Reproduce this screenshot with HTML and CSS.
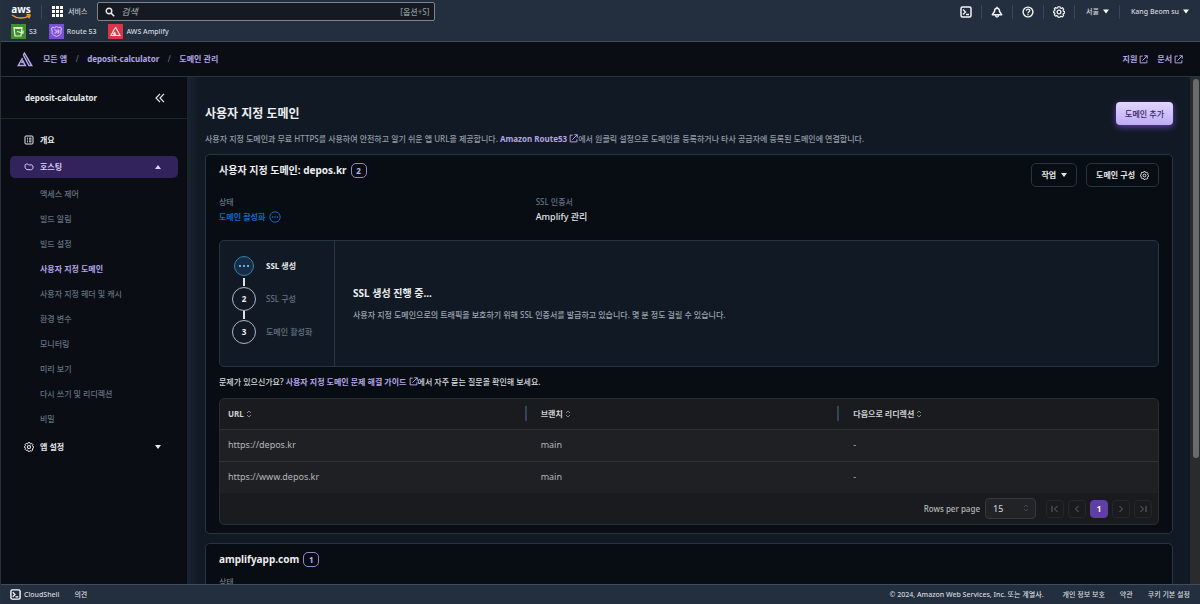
FILE: index.html
```html
<!DOCTYPE html>
<html lang="ko">
<head>
<meta charset="utf-8">
<title>도메인 관리</title>
<link rel="stylesheet" href="styles.css">
</head>
<body>
<svg class="defs" aria-hidden="true">
  <symbol id="external" viewBox="0 0 12 12"><path d="M5 1.5H1.5v9h9V7M7 1h4v4M11 1L4.5 7.500" fill="none" stroke="currentColor" stroke-width="1.300"/></symbol>
  <symbol id="gear" viewBox="0 0 16 16"><path d="M6.700 1h2.600l.5 1.700 1.200.5 1.600-.9 1.600 1.900-.8 1.500.4 1.200 1.700.6v2l-1.700.5-.5 1.200.8 1.600-1.800 1.700-1.500-.8-1.200.5L9.200 15H6.800l-.5-1.700-1.300-.5-1.500.8-1.700-1.700.8-1.600-.5-1.200L.5 9V7l1.700-.6.4-1.200-.8-1.500L3.500 2l1.500 1 1.200-.4z" fill="none" stroke="currentColor" stroke-width="1.600" stroke-linejoin="round"/><circle cx="8" cy="8" r="2.500" fill="none" stroke="currentColor" stroke-width="1.700"/></symbol>
  <symbol id="caret" viewBox="0 0 6 4"><path d="M0 0h6L3 4z" fill="currentColor"/></symbol>
  <symbol id="shell" viewBox="0 0 12 12"><rect x="1" y="1" width="10" height="10" rx="1.500" fill="none" stroke="currentColor" stroke-width="1.500"/><path d="M3 3.500L5.500 6 3 8.500M6 8.500h3" fill="none" stroke="currentColor" stroke-width="1.300"/></symbol>
  <symbol id="sort" viewBox="0 0 6 8"><path d="M1 3l2-2 2 2M1 5l2 2 2-2" fill="none" stroke="currentColor"/></symbol>
  <symbol id="amplify" viewBox="0 0 16 15"><path d="M5.500 6L1.300 13.500h7L5.800 8.800 4.700 11.200M6.300 3L7.500 1.200 14.700 13.500H12L6.300 3" fill="none" stroke="currentColor" stroke-width="1.500"/></symbol>
</svg>
<div class="app">
  <header class="top">
    <div class="top-row">
      <a class="aws" href="#" aria-label="aws"><span>aws</span><svg viewBox="0 0 20 6"><path d="M1 1c5 4 12 4 17 .8M15.500 1c2-.6 3.600-.6 3.500.2S18.500 3.500 17.600 4.300" fill="none" stroke="#f79a1e" stroke-width="1.500"/></svg></a>
      <button class="services"><svg viewBox="0 0 11 11"><path d="M0 0h3v3H0zM4 0h3v3H4zM8 0h3v3H8zM0 4h3v3H0zM4 4h3v3H4zM8 4h3v3H8zM0 8h3v3H0zM4 8h3v3H4zM8 8h3v3H8z" fill="#fff"/></svg>서비스</button>
      <label class="search"><svg viewBox="0 0 10 10"><circle cx="4" cy="4" r="2.800" fill="none" stroke="#e8eaec" stroke-width="1.400"/><path d="M6 6l3.200 3.200" stroke="#e8eaec" stroke-width="1.600"/></svg><input type="search" placeholder="검색" aria-label="검색"><span>[옵션+S]</span></label>
      <div class="tools">
        <button aria-label="CloudShell"><svg><use href="#shell"/></svg></button>
        <button aria-label="알림"><svg viewBox="0 0 12 12"><path d="M6 .8v1.500M6 2.300C3.800 2.300 3.500 4 3.500 5.500L1.300 8.700h9.400L8.500 5.500C8.500 4 8.200 2.300 6 2.300zM4.500 9.500c.3 2 2.700 2 3 0" fill="none" stroke="currentColor" stroke-width="1.500" stroke-linejoin="round"/></svg></button>
        <button aria-label="도움말"><svg viewBox="0 0 12 12"><circle cx="6" cy="6" r="4.900" fill="none" stroke="currentColor" stroke-width="1.400"/><path d="M4.300 4.800c0-2.300 3.500-2.300 3.500-.2C7.800 5.800 6 5.700 6 7.200M6 8v1.200" fill="none" stroke="currentColor" stroke-width="1.300"/></svg></button>
        <button aria-label="설정"><svg><use href="#gear"/></svg></button>
        <button class="wide">서울<svg class="caret"><use href="#caret"/></svg></button>
        <button class="wide">Kang Beom su<svg class="caret"><use href="#caret"/></svg></button>
      </div>
    </div>
    <nav class="favorites">
      <a href="#"><svg class="s3" viewBox="0 0 15 15"><path d="M3 3.500h8l-1 8.500H4zM3 3.500c1.500 1.300 6.500 1.300 8 0M6 7.500l6 1.500V6.500" fill="none" stroke="#e6f5df" stroke-width="1.200"/></svg>S3</a>
      <a href="#"><svg class="r53" viewBox="0 0 15 15"><path d="M3.500 3l2 .7 2-1.200 2 1.200 2-.7 1 2-.7 2c1 4-2 4-4.300 5.500C5.200 11 2.200 11 3.200 7l-.7-2zM5.500 6h1.700v3H5.500M8.300 6h1.500v3H8.300M8.300 7.500h1.500" fill="none" stroke="#ded0ff"/></svg>Route 53</a>
      <a href="#"><svg class="amp" viewBox="0 0 15 15"><path d="M7 4L3 11.500h3.500L5.400 9M7.500 3l4.500 8.500H7.800L6.500 8" fill="none" stroke="#ffe4e4" stroke-width="1.200"/></svg>AWS Amplify</a>
    </nav>
  </header>
  <div class="crumbbar">
    <nav class="crumbs"><svg><use href="#amplify"/></svg><a href="#">모든 앱</a><i>/</i><a href="#">deposit-calculator</a><i>/</i><a href="#">도메인 관리</a></nav>
    <div class="help"><a href="#">지원<svg class="ext"><use href="#external"/></svg></a><a href="#">문서<svg class="ext"><use href="#external"/></svg></a></div>
  </div>
  <div class="body">
    <aside class="side">
      <div class="side-head"><strong>deposit-calculator</strong><button aria-label="접기"><svg viewBox="0 0 10 10"><path d="M5 .8L1 5l4 4.200M9 .8L5 5l4 4.200" fill="none" stroke="currentColor" stroke-width="1.200"/></svg></button></div>
      <nav class="menu">
        <a class="group" href="#"><svg viewBox="0 0 10 10"><rect x="1" y="1" width="8" height="8" rx="1" fill="none" stroke="currentColor"/><path d="M3 3.200h1M5 3.200h2.500M3 5h1M5 5h2.500M3 6.800h1M5 6.800h2.500" stroke="currentColor"/></svg>개요</a>
        <button class="group open"><svg viewBox="0 0 10 10"><path d="M1 3.800C1 2.200 2 2 3 2c1.300 0 1.300.9 2.300.9H7c1.400 0 2 .8 2 2.200C9 7.300 8 7.700 6.500 7.700H4C2 7.700 1 6.500 1 3.800z" fill="none" stroke="currentColor"/></svg>호스팅<svg class="caret up"><use href="#caret"/></svg></button>
        <div class="sub">
          <a href="#">액세스 제어</a><a href="#">빌드 알림</a><a href="#">빌드 설정</a><a class="current" href="#">사용자 지정 도메인</a><a href="#">사용자 지정 헤더 및 캐시</a><a href="#">환경 변수</a><a href="#">모니터링</a><a href="#">미리 보기</a><a href="#">다시 쓰기 및 리디렉션</a><a href="#">비밀</a>
        </div>
        <button class="group"><svg><use href="#gear"/></svg>앱 설정<svg class="caret"><use href="#caret"/></svg></button>
      </nav>
    </aside>
    <main class="main">
      <div class="page-head"><h1>사용자 지정 도메인</h1><button class="primary">도메인 추가</button></div>
      <p class="desc">사용자 지정 도메인과 무료 HTTPS를 사용하여 안전하고 알기 쉬운 앱 URL을 제공합니다. <a href="#">Amazon Route53 <svg class="ext"><use href="#external"/></svg></a>에서 원클릭 설정으로 도메인을 등록하거나 타사 공급자에 등록된 도메인에 연결합니다.</p>
      <section class="card">
        <div class="card-head">
          <h2>사용자 지정 도메인: depos.kr<span class="badge">2</span></h2>
          <div class="actions"><button>작업<svg class="caret"><use href="#caret"/></svg></button><button>도메인 구성<svg class="gear"><use href="#gear"/></svg></button></div>
        </div>
        <dl class="facts">
          <div><dt>상태</dt><dd class="active">도메인 활성화<svg viewBox="0 0 12 12"><circle cx="6" cy="6" r="5.200" fill="none" stroke="currentColor"/><path d="M3 6h1.300M5.400 6h1.300M7.800 6h1.300" stroke="currentColor" stroke-width="1.300"/></svg></dd></div>
          <div><dt>SSL 인증서</dt><dd>Amplify 관리</dd></div>
        </dl>
        <div class="progress">
          <ol class="steps">
            <li class="now"><b><svg viewBox="0 0 12 4"><path d="M1 1h2v2H1zM5 1h2v2H5zM9 1h2v2H9z" fill="currentColor"/></svg></b><span>SSL 생성</span></li>
            <li><b>2</b><span>SSL 구성</span></li>
            <li><b>3</b><span>도메인 활성화</span></li>
          </ol>
          <div class="message"><h3>SSL 생성 진행 중...</h3><p>사용자 지정 도메인으로의 트래픽을 보호하기 위해 SSL 인증서를 발급하고 있습니다. 몇 분 정도 걸릴 수 있습니다.</p></div>
        </div>
        <p class="faq">문제가 있으신가요? <a href="#">사용자 지정 도메인 문제 해결 가이드 <svg class="ext"><use href="#external"/></svg></a>에서 자주 묻는 질문을 확인해 보세요.</p>
        <div class="table-box">
          <table>
            <thead><tr><th><div>URL<svg><use href="#sort"/></svg></div></th><th><div>브랜치<svg><use href="#sort"/></svg></div></th><th><div>다음으로 리디렉션<svg><use href="#sort"/></svg></div></th></tr></thead>
            <tbody><tr><td>https://depos.kr</td><td>main</td><td>-</td></tr><tr><td>https://www.depos.kr</td><td>main</td><td>-</td></tr></tbody>
          </table>
          <div class="pager">
            <label for="rows">Rows per page</label>
            <span class="select"><select id="rows"><option>15</option></select><svg><use href="#sort"/></svg></span>
            <div class="pages">
              <button aria-label="처음"><svg viewBox="0 0 8 8"><path d="M1 1v6M6.500 1l-3 3 3 3" fill="none" stroke="currentColor"/></svg></button>
              <button aria-label="이전"><svg viewBox="0 0 8 8"><path d="M5.500 1l-3 3 3 3" fill="none" stroke="currentColor"/></svg></button>
              <button class="on">1</button>
              <button aria-label="다음"><svg viewBox="0 0 8 8"><path d="M2.500 1l3 3-3 3" fill="none" stroke="currentColor"/></svg></button>
              <button aria-label="마지막"><svg viewBox="0 0 8 8"><path d="M7 1v6M1.500 1l3 3-3 3" fill="none" stroke="currentColor"/></svg></button>
            </div>
          </div>
        </div>
      </section>
      <section class="card">
        <div class="card-head"><h2>amplifyapp.com<span class="badge">1</span></h2></div>
        <dl class="facts"><div><dt>상태</dt></div></dl>
      </section>
    </main>
    <div class="scroll"><div class="thumb"></div></div>
  </div>
  <footer class="foot">
    <a href="#"><svg><use href="#shell"/></svg>CloudShell</a><a href="#">의견</a>
    <span class="copy">© 2024, Amazon Web Services, Inc. 또는 계열사.</span><a href="#">개인 정보 보호</a><a href="#">약관</a><a href="#">쿠키 기본 설정</a>
  </footer>
</div>
</body>
</html>
```
FILE: styles.css
```css
* { box-sizing: border-box; }
body { margin: 0; background: #0a0e14; color: #d5d9de; font: 8px/14px "Noto Sans", "Noto Sans CJK KR", sans-serif; }
h1, h2, h3, p, dl, dd, ol { margin: 0; padding: 0; }
a { color: inherit; text-decoration: none; }
button { margin: 0; padding: 0; border: 0; background: none; color: inherit; font: inherit; white-space: nowrap; }
i { font-style: normal; }
svg { flex: none; }
.defs { position: absolute; width: 0; height: 0; }
.caret { width: 6px; height: 4px; }
.ext { width: 9px; height: 9px; vertical-align: -1px; }

.app { height: 100vh; display: flex; flex-direction: column; border-left: 1px solid #27313a; }

.top { background: #232f3e; border-bottom: 1px solid #414d5a; height: 42px; flex: none; font-size: 7px; font-weight: 500; }
.top-row { display: flex; align-items: center; height: 23px; padding: 0 11px 0 10px; }
.aws { display: flex; flex-direction: column; align-items: center; width: 20px; font-size: 10px; line-height: 10px; font-weight: 700; color: #fff; }
.aws svg { width: 20px; height: 6px; }
.services { display: flex; align-items: center; gap: 5px; margin-left: 10px; padding-left: 10px; border-left: 1px solid #3a4655; color: #d0d4d9; }
.services svg { width: 11px; height: 11px; }
.search { display: flex; align-items: center; gap: 6px; width: 338px; height: 19px; margin-left: 10px; padding: 0 5px 0 7px; background: #161922; border: 1px solid #7b8488; border-radius: 2px; color: #8d9797; font-size: 8px; }
.search svg { width: 10px; height: 10px; }
.search input { flex: 1; min-width: 0; height: 14px; border: 0; padding: 0; background: none; font: inherit; font-size: 9px; color: #fff; outline: 0; }
.search input::placeholder { color: #8d9797; font-style: italic; }
.tools { display: flex; margin-left: auto; color: #f4f5f6; }
.tools button { width: 31px; height: 14px; display: flex; align-items: center; justify-content: center; border-right: 1px solid #3a4655; }
.tools button svg { width: 12px; height: 12px; }
.tools .wide { width: auto; gap: 4px; padding: 0 10px 0 11px; color: #d5d9de; }
.tools .wide:last-child { padding-right: 0; border: 0; }
.tools .wide .caret { width: 6px; height: 5px; color: #fff; }
.favorites { display: flex; gap: 12px; padding: 1px 10px; }
.favorites a { display: flex; align-items: center; gap: 3px; }
.favorites svg { width: 15px; height: 15px; }
.s3 { background: #3f8f2b; }
.r53 { background: #7d4fd6; }
.amp { background: #dc3545; }

.crumbbar { display: flex; justify-content: space-between; align-items: center; height: 35px; flex: none; padding: 0 17px 0 16px; border-bottom: 1px solid #263445; color: #b3a3e8; font-weight: 700; }
.crumbs { display: flex; align-items: center; }
.crumbs svg { width: 16px; height: 15px; margin-right: 10px; }
.crumbs i { width: 20px; text-align: center; color: #6b7885; font-weight: 400; }
.help { display: flex; gap: 9px; }
.help a { display: flex; align-items: center; gap: 2px; }

.body { display: flex; flex: 1; min-height: 0; }
.side { width: 186px; flex: none; }
.side-head { display: flex; align-items: center; justify-content: space-between; height: 42px; padding: 0 22px 0 24px; border-bottom: 1px solid #1c2734; color: #e8eaec; }
.side-head svg { width: 10px; height: 10px; display: block; }
.menu { padding: 10px 9px; }
.group { display: flex; align-items: center; gap: 6px; width: 100%; height: 22px; padding: 0 17px 0 14px; border-radius: 5px; font-weight: 700; color: #e8eaec; }
.group svg:first-child { width: 10px; height: 10px; }
.group .caret { margin-left: auto; }
.up { transform: rotate(180deg); }
.open { margin-top: 5px; background: #33235c; color: #dcd2ff; }
.sub { display: flex; flex-direction: column; padding: 3px 0 5px 30px; color: #647282; font-weight: 500; }
.sub a { line-height: 25px; }
.sub .current { color: #b3a3e8; font-weight: 700; }

.main { flex: 1; min-width: 0; overflow: hidden; padding: 25px 17px 0 18px; background: linear-gradient(90deg, #19242f, #111a24 12px); }
.page-head { display: flex; align-items: center; justify-content: space-between; }
h1 { font-size: 12px; line-height: 20px; color: #eceef0; }
.primary { height: 23px; padding: 0 9px; border-radius: 4px; background: linear-gradient(#e0d6ff, #bfabf5); color: #32245c; font-weight: 500; box-shadow: 0 2px 6px #5f3fa8; }
.desc { margin-top: 7px; color: #919ca8; font-weight: 500; }
.desc a, .faq a { color: #b3a3e8; font-weight: 700; }
.card { margin-top: 8px; padding: 8px 13px; background: #080d13; border: 1px solid #263545; border-radius: 5px; }
.card + .card { margin-top: 9px; }
.card-head { display: flex; align-items: flex-start; justify-content: space-between; }
h2 { display: flex; align-items: center; gap: 4px; font-size: 10px; line-height: 15px; color: #eceef0; }
.badge { width: 16px; height: 15px; border: 1px solid #9583d0; border-radius: 5px; text-align: center; color: #c0b0f0; font-size: 8px; line-height: 13px; }
.actions { display: flex; gap: 9px; }
.actions button { height: 24px; display: flex; align-items: center; gap: 5px; padding: 0 9px; border: 1px solid #263545; border-radius: 5px; font-weight: 700; color: #e3e6e9; }
.actions .gear { width: 9px; height: 9px; }
.facts { display: grid; grid-template-columns: repeat(3, 1fr); gap: 10px; margin-top: 8px; }
.facts dt { color: #647282; font-weight: 500; }
.facts dd { display: flex; align-items: center; gap: 4px; margin-top: 1px; color: #e0e3e6; font-size: 9px; font-weight: 500; }
.facts .active { color: #1268c4; font-size: 8px; font-weight: 700; }
.facts svg { width: 12px; height: 12px; }
.progress { display: flex; min-height: 127px; margin-top: 16px; background: #111a24; border: 1px solid #263545; border-radius: 5px; }
.steps { width: 115px; flex: none; padding: 12px 0 0 12px; border-right: 1px solid #263545; list-style: none; }
.steps li { position: relative; display: flex; align-items: center; gap: 10px; height: 25px; margin-bottom: 8px; color: #647282; font-weight: 500; }
.steps li + li::before { content: ""; position: absolute; left: 11px; top: -8px; width: 2px; height: 8px; background: #e0e3e6; }
.steps b { width: 24px; height: 24px; display: flex; align-items: center; justify-content: center; border: 1px solid #b0b6bc; border-radius: 50%; color: #eceef0; }
.steps .now { color: #e8eaec; font-weight: 700; }
.steps .now b { width: 20px; height: 20px; margin: 0 2px; border-color: #377dad; background: #172d43; color: #5bb0ee; }
.steps svg { width: 12px; height: 4px; }
.message { display: flex; flex-direction: column; justify-content: center; gap: 8px; padding: 0 18px; color: #9ca5af; font-weight: 500; }
h3 { font-size: 10px; line-height: 14px; color: #eceef0; }
.faq { margin: 8px 0 9px; font-weight: 500; }
.table-box { background: #1a1b1e; border: 1px solid #292c31; border-radius: 5px; overflow: hidden; }
table { width: 100%; border-collapse: collapse; table-layout: fixed; }
th, td { padding: 0 8px; text-align: left; color: #b4b6ba; }
th { height: 30px; padding-right: 6px; color: #cfd1d4; }
th div { display: flex; align-items: center; gap: 2px; height: 15px; }
th:not(:last-child) div { border-right: 2px solid #324459; }
th svg { width: 6px; height: 8px; color: #7c828a; }
td { height: 32px; background: #1f2023; border-top: 1px solid #2f3238; font-size: 9px; }
.pager { display: flex; align-items: center; justify-content: flex-end; gap: 5px; height: 31px; padding-right: 6px; color: #b4b6ba; font-weight: 500; }
.select { position: relative; width: 51px; height: 21px; }
.select select { appearance: none; width: 100%; height: 100%; padding: 0 7px; border: 1px solid #35383d; border-radius: 4px; background: #212327; color: #c2c4c8; font: inherit; font-size: 9px; }
.select svg { position: absolute; right: 7px; top: 6px; width: 6px; height: 8px; color: #36475a; }
.pages { display: flex; gap: 4px; margin-left: 5px; }
.pages button { width: 18px; height: 18px; display: flex; align-items: center; justify-content: center; border: 1px solid #25272b; border-radius: 4px; color: #62666d; }
.pages svg { width: 8px; height: 8px; }
.pages .on { background: #5f3fa3; border-color: #5f3fa3; color: #fff; font-weight: 700; }
.scroll { width: 10px; flex: none; padding: 2px 1px 0 3px; background: #2b2b2b; }
.thumb { height: 75%; border-radius: 3px; background: #6b6b6b; }

.foot { display: flex; align-items: center; gap: 15px; height: 20px; flex: none; padding: 0 10px 0 9px; background: #232f3e; border-top: 1px solid #414d5a; font-size: 7px; font-weight: 500; }
.foot a { display: flex; align-items: center; gap: 3px; }
.foot svg { width: 11px; height: 11px; color: #fff; }
.copy { margin: 0 4px 0 auto; }
```
